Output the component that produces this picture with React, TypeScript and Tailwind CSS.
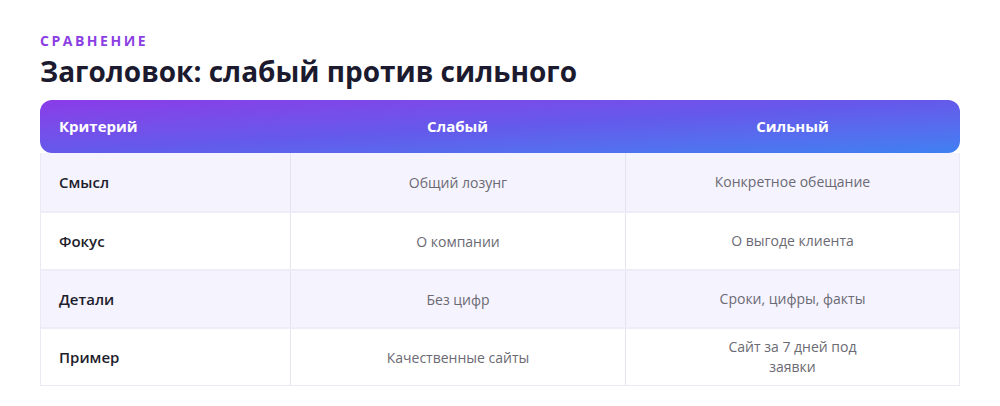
const rows = [
  { name: 'Смысл', weak: 'Общий лозунг', strong: 'Конкретное обещание' },
  { name: 'Фокус', weak: 'О компании', strong: 'О выгоде клиента' },
  { name: 'Детали', weak: 'Без цифр', strong: 'Сроки, цифры, факты' },
  { name: 'Пример', weak: 'Качественные сайты', strong: 'Сайт за 7 дней под заявки' },
];

export default function App() {
  return (
    <div className="w-[1000px] h-[406px] bg-white px-10 pt-[31px] font-['Open_Sans',sans-serif]">
      <div className="text-[14px] font-bold tracking-[0.18em] text-[#8b3fe3] leading-[20px]">СРАВНЕНИЕ</div>
      <h1 className="mt-[1px] text-[28px] font-bold leading-[38px] text-[#1b1a2e]">Заголовок: слабый против сильного</h1>

      <div className="mt-[10px] w-[920px]">
        {/* Header */}
        <div className="grid grid-cols-[250px_335px_335px] h-[53px] items-center rounded-xl bg-gradient-to-br from-[#8a3be8] via-[#6459ea] to-[#3d80f3] text-[15px] font-bold text-white">
          <div className="pl-[19px]">Критерий</div>
          <div className="text-center">Слабый</div>
          <div className="text-center">Сильный</div>
        </div>

        {/* Body */}
        <div className="border-x border-b border-[#ebe9f3]">
          {rows.map((row, i) => (
            <div
              key={row.name}
              className={`grid grid-cols-[249px_335px_334px] h-[58px] ${i > 0 ? 'border-t-2 border-[#eeecf6]' : ''} ${i % 2 === 0 ? 'bg-[#f5f3fe]' : 'bg-white'}`}
            >
              <div className="flex items-center pl-[18px] text-[15px] font-semibold text-[#1e1d2c]">{row.name}</div>
              <div className="flex items-center justify-center border-l border-[#e6e3f0] text-[14px] text-[#6b6a73]">{row.weak}</div>
              <div className="flex items-center justify-center border-l border-[#e6e3f0] text-[14px] text-[#6b6a73]">
                <div className="max-w-[170px] text-center leading-[20px]">{row.strong}</div>
              </div>
            </div>
          ))}
        </div>
      </div>
    </div>
  );
}
